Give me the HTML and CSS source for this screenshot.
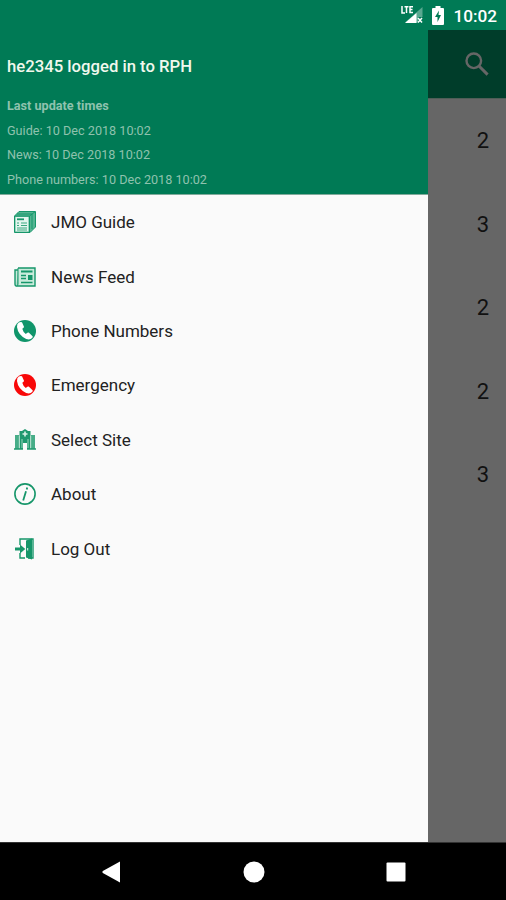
FILE: index.html
```
<!DOCTYPE html>
<html lang="en">
<head>
    <meta charset="UTF-8">
    <meta name="viewport" content="width=device-width, initial-scale=1.0">
    <title>JMO Guide</title>
    <link rel="stylesheet" href="styles.css">
</head>
<body>
    <div class="screen">
        <header class="status-bar">
            <svg class="signal" width="22" height="20" viewBox="0 0 22 20">
                <path d="M21.5 2V12H17V17.5H4Z" fill="#fff" fill-opacity=".35"/>
                <path d="M15.5 8V18H4Z" fill="#fff"/>
                <path d="M1 1V8H4M3.5 1.7H7.5M5.5 1.7V8M12 1.7H9V7.5H12M9 4.5H11.5" fill="none" stroke="#fff" stroke-width="1.5"/>
                <path d="M17 13L21 17.5M21 13L17 17.5" stroke="#fff" stroke-width="1.5"/>
            </svg>
            <svg class="battery" width="12" height="19" viewBox="0 0 12 19">
                <path d="M3.5 0H8.5V2H11Q12 2 12 3V18Q12 19 11 19H1Q0 19 0 18V3Q0 2 1 2H3.5Z" fill="#fff"/>
                <path d="M7 4.5L3 11H5.5V16L9 9H6.5Z" fill="#007a55"/>
            </svg>
            <span class="clock">10:02</span>
        </header>

        <main class="content">
            <!-- Navigation drawer -->
            <nav class="drawer">
                <div class="drawer-header">
                    <h1>he2345 logged in to RPH</h1>
                    <p class="update-title">Last update times</p>
                    <p>Guide: 10 Dec 2018 10:02</p>
                    <p>News: 10 Dec 2018 10:02</p>
                    <p>Phone numbers: 10 Dec 2018 10:02</p>
                </div>
                <ul class="menu">
                    <li>
                        <svg width="22" height="22" viewBox="0 0 22 22">
                            <path d="M.5 5L5 .5H21.5V16L16 21.5H.5Z" fill="#55b592" stroke="#16966a"/>
                            <path d="M1 5H15.5V21M15.5 5L21 .8M3 3H18V18" fill="none" stroke="#16966a"/>
                            <path d="M1.5 6H14.5V20.5H1.5Z" fill="#e5f6ef"/>
                            <path d="M3 8.3H10" stroke="#16966a" stroke-width="1.8"/>
                            <path d="M3 12H5M3 14.5H5M7 12H13M7 14.5H13M3 17H13M3 19H13" stroke="#3aa980"/>
                        </svg>
                        <span>JMO Guide</span>
                    </li>
                    <li>
                        <svg width="22" height="20" viewBox="0 0 22 20">
                            <path d="M4 1H21V19H2.5Q1 19 1 17V3H4" fill="#caebdc" stroke="#16966a" stroke-width="1.4"/>
                            <path d="M4 1V17Q4 19 2.5 19" fill="#6fc3a4" stroke="#16966a"/>
                            <path d="M7 4.5H18.5" stroke="#16966a" stroke-width="2"/>
                            <path d="M7 8.5H12M7 11.5H12M7 15.5H18.5" stroke="#16966a" stroke-width="1.3"/>
                            <path d="M14 8H18.5V13H14Z" fill="#16966a"/>
                        </svg>
                        <span>News Feed</span>
                    </li>
                    <li class="phone-item">
                        <svg width="22" height="22" viewBox="0 0 22 22">
                            <circle cx="11" cy="11" r="11" fill="currentColor"/>
                            <path d="M4.8 2.6Q2.8 3.8 3 7Q4 15 12.2 19Q16 20.4 18.4 17.8L18.8 16.5L14.7 12.6Q13.7 12.4 11.8 14Q9 12 8.3 8.8Q10.1 8 10 6.8L8 2.2Q6.4 1.5 4.8 2.6Z" fill="#fff"/>
                        </svg>
                        <span>Phone Numbers</span>
                    </li>
                    <li class="emergency-item">
                        <svg width="22" height="22" viewBox="0 0 22 22">
                            <circle cx="11" cy="11" r="11" fill="currentColor"/>
                            <path d="M4.8 2.6Q2.8 3.8 3 7Q4 15 12.2 19Q16 20.4 18.4 17.8L18.8 16.5L14.7 12.6Q13.7 12.4 11.8 14Q9 12 8.3 8.8Q10.1 8 10 6.8L8 2.2Q6.4 1.5 4.8 2.6Z" fill="#fff"/>
                        </svg>
                        <span>Emergency</span>
                    </li>
                    <li>
                        <svg width="22" height="21" viewBox="0 0 22 21">
                            <path d="M5.5 20V2H8L11 0L14 2H16.5V20H13V14H9V20Z" fill="#20996f"/>
                            <path d="M1 6H5V20H1ZM17 6H21V20H17Z" fill="#47ad88"/>
                            <path d="M11 2.5V7.5M8.5 5H13.5" stroke="#d9f1e7" stroke-width="1.6"/>
                            <path d="M8 10V19M14 10V19M5.3 7V19M16.7 7V19" stroke="#bfe6d6" stroke-width=".8"/>
                            <path d="M0 20H9M13 20H22" stroke="#20996f" stroke-width="1.4"/>
                        </svg>
                        <span>Select Site</span>
                    </li>
                    <li>
                        <svg width="22" height="22" viewBox="0 0 22 22">
                            <circle cx="11" cy="11" r="10.1" fill="none" stroke="#16966a" stroke-width="1.6"/>
                            <path d="M13.2 4.5L12.7 6.4M12 8.2L9.2 17.5" fill="none" stroke="#16966a" stroke-width="1.8"/>
                        </svg>
                        <span>About</span>
                    </li>
                    <li>
                        <svg width="22" height="22" viewBox="0 0 22 22">
                            <path d="M6 7V1H19V20H14M6 15V20H11" fill="none" stroke="#16966a" stroke-width="1.4"/>
                            <path d="M12 2.5L18 .5V21.5L12 19.5Z" fill="#16966a"/>
                            <path d="M13.7 10V12.5" stroke="#e5f6ef"/>
                            <path d="M1 11H8" stroke="#16966a" stroke-width="3"/>
                            <path d="M6 6.5L11.3 11L6 15.5Z" fill="#16966a"/>
                        </svg>
                        <span>Log Out</span>
                    </li>
                </ul>
            </nav>

            <!-- Dimmed page behind the drawer -->
            <section class="page">
                <div class="toolbar">
                    <svg width="24" height="24" viewBox="0 0 24 24">
                        <circle cx="8.8" cy="8.8" r="7.3" fill="none" stroke="#666" stroke-width="2.4"/>
                        <path d="M14 14L22.6 22.6" stroke="#666" stroke-width="3"/>
                    </svg>
                </div>
                <ul class="counts">
                    <li>2</li>
                    <li>3</li>
                    <li>2</li>
                    <li>2</li>
                    <li>3</li>
                </ul>
            </section>
        </main>

        <footer class="nav-bar">
            <svg width="20" height="22" viewBox="0 0 20 22"><path d="M19 .5V21.5L1.8 11.9Q.8 11 1.8 10.1Z" fill="#fff"/></svg>
            <svg width="22" height="22" viewBox="0 0 22 22"><circle cx="11" cy="11" r="10.5" fill="#fff"/></svg>
            <svg width="20" height="20" viewBox="0 0 20 20"><rect x=".5" y=".5" width="19" height="19" rx="1" fill="#fff"/></svg>
        </footer>
    </div>
</body>
</html>
```

FILE: styles.css
```
* {
    box-sizing: border-box;
}
body {
    margin: 0;
    font-family: Roboto, "Noto Sans", sans-serif;
    background-color: #000;
}
svg {
    display: block;
    flex-shrink: 0;
}
h1, p, ul {
    margin: 0;
    padding: 0;
}
ul {
    list-style: none;
}
.screen {
    width: 506px;
    height: 900px;
    display: flex;
    flex-direction: column;
    overflow: hidden;
}
.status-bar {
    height: 30px;
    display: flex;
    align-items: center;
    justify-content: flex-end;
    padding-right: 9px;
    background-color: #007a55;
    color: #fff;
}
.battery {
    margin: 0 9px 0 9px;
}
.clock {
    font-size: 17.2px;
    font-weight: 500;
    line-height: 30px;
    padding-top: 2px;
}
.content {
    height: 812px;
    display: flex;
}
.drawer {
    width: 428px;
    background-color: #fafafa;
}
.drawer-header {
    height: 165px;
    padding: 25px 7px 0;
    background-color: #007a55;
    border-bottom: 1px solid #80aa9b;
    color: #8fc2ae;
    font-size: 12.65px;
    line-height: 24.7px;
}
.drawer-header h1 {
    height: 39px;
    color: #f1f8ed;
    font-size: 16.7px;
    font-weight: 500;
    line-height: 23px;
}
.drawer-header .update-title {
    font-weight: 700;
}
.menu {
    padding: 0 14px;
}
.menu li {
    height: 54.4px;
    display: flex;
    align-items: center;
    gap: 15px;
    color: #222;
    font-size: 17px;
}
.phone-item svg {
    color: #10956a;
}
.emergency-item svg {
    color: #f80808;
}
.page {
    flex: 1;
    background-color: #666;
}
.toolbar {
    height: 69px;
    display: flex;
    align-items: center;
    justify-content: flex-end;
    padding-right: 17px;
    background-color: #003d2a;
    border-bottom: 1px solid #4e5e57;
}
.counts li {
    height: 83.5px;
    padding-right: 17px;
    color: #111;
    font-size: 22px;
    line-height: 83.5px;
    text-align: right;
}
.nav-bar {
    height: 58px;
    display: flex;
    align-items: center;
    justify-content: space-between;
    padding: 0 100px 0 101px;
    background-color: #000;
    border-top: 1px solid #333;
}
```
